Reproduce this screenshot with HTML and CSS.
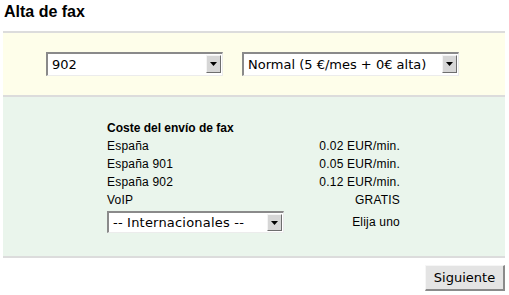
FILE: index.html
```html
<!DOCTYPE html>
<html lang="es">
<head>
  <meta charset="UTF-8">
  <title>Alta de fax</title>
  <link rel="stylesheet" href="styles.css">
</head>
<body>

<div class="page">
  <h2 class="title">Alta de fax</h2>

  <div class="band band-yellow">
    <div class="combo combo-prefix">
      <span class="combo-text">902</span>
      <span class="combo-btn"><svg width="7" height="4" viewBox="0 0 7 4"><path d="M0 0h7L3.5 4z"/></svg></span>
    </div>
    <div class="combo combo-plan">
      <span class="combo-text">Normal (5 €/mes + 0€ alta)</span>
      <span class="combo-btn"><svg width="7" height="4" viewBox="0 0 7 4"><path d="M0 0h7L3.5 4z"/></svg></span>
    </div>
  </div>

  <div class="band band-green">
    <table class="rates">
      <tr><th colspan="2">Coste del envío de fax</th></tr>
      <tr><td>España</td><td class="price">0.02 EUR/min.</td></tr>
      <tr><td>España 901</td><td class="price">0.05 EUR/min.</td></tr>
      <tr><td>España 902</td><td class="price">0.12 EUR/min.</td></tr>
      <tr><td>VoIP</td><td class="price">GRATIS</td></tr>
      <tr class="row-select">
        <td>
          <div class="combo combo-intl">
            <span class="combo-text">-- Internacionales --</span>
            <span class="combo-btn"><svg width="7" height="4" viewBox="0 0 7 4"><path d="M0 0h7L3.5 4z"/></svg></span>
          </div>
        </td>
        <td class="price">Elija uno</td>
      </tr>
    </table>
  </div>

  <div class="actions">
    <button class="btn">Siguiente</button>
  </div>
</div>

</body>
</html>
```

FILE: styles.css
```css
* { box-sizing: border-box; }
body { margin: 0; background: white; font-family: "Liberation Sans", Arial, sans-serif; color: #000; }

.page {
  margin: 0 4px 0 3px;
}

.title {
  margin: 3px 0 10px 1px;
  font-size: 16px;
  line-height: 18px;
  font-weight: bold;
}

.band {
  border-top: 2px solid #dcdcdc;
}

.band-yellow {
  background: #fefeea;
  display: flex;
  justify-content: center;
  gap: 19px;
  padding: 19px 3px 19px 0;
}

.band-green {
  background: #eaf5ec;
  padding: 22px 0 23px;
  border-bottom: 2px solid #dcdcdc;
}

/* old-style combo box */
.combo {
  display: flex;
  align-items: stretch;
  background: white;
  height: 24px;
  padding: 1px 1px 2px 0;
  border-style: solid;
  border-width: 2px 1px 1px 2px;
  border-color: #8a8a8a #ececec #ececec #8a8a8a;
  font-family: "DejaVu Sans", sans-serif;
  font-size: 13px;
}

.combo-text {
  flex: 1;
  display: flex;
  align-items: center;
  padding-left: 4px;
  white-space: nowrap;
}

.combo-btn {
  width: 15px;
  background: #d6d6d6;
  border: 1px solid;
  border-color: #f4f4f4 #6e6e6e #6e6e6e #f4f4f4;
  display: flex;
  align-items: center;
  justify-content: center;
}

.combo-prefix { width: 177px; }
.combo-plan { width: 217px; }
.combo-intl { width: 177px; height: 22px; padding-bottom: 1px; }

.rates {
  width: 294px;
  margin: 0 auto;
  border-collapse: collapse;
  font-size: 12px;
  letter-spacing: 0.2px;
}

.rates th,
.rates td {
  padding: 0;
  height: 18px;
  line-height: 18px;
  text-align: left;
}

.rates th { font-weight: bold; letter-spacing: 0; }

.rates .price { text-align: right; padding-right: 1px; }

.rates .row-select td {
  height: 24px;
  vertical-align: middle;
  padding-top: 2px;
}

.actions {
  display: flex;
  justify-content: flex-end;
  padding-top: 7px;
}

.btn {
  width: 80px;
  height: 26px;
  font-family: "DejaVu Sans", sans-serif;
  font-size: 13px;
  background: #e4e4e4;
  border-style: solid;
  border-width: 1px 2px 2px 1px;
  border-color: #f6f6f6 #8a8a8a #8a8a8a #f6f6f6;
  padding: 0;
  color: #000;
}
```
